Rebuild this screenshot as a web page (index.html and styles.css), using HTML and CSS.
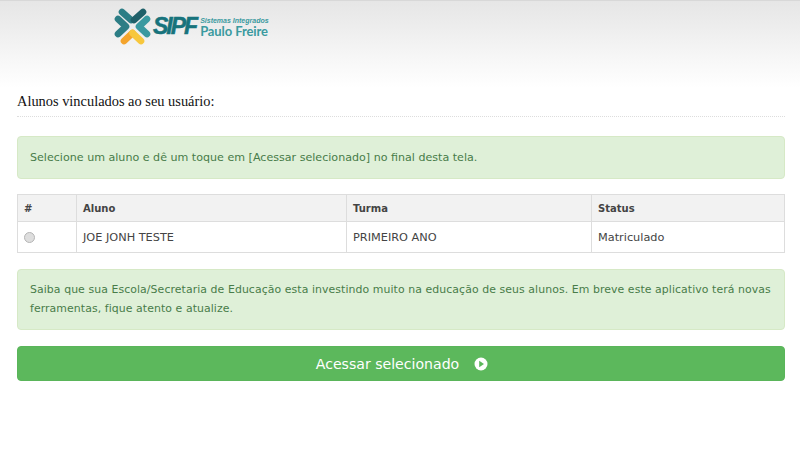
FILE: index.html
```html
<!DOCTYPE html>
<html lang="pt-BR">
<head>
  <meta charset="UTF-8" />
  <title>SIPF</title>
  <link rel="stylesheet" href="styles.css">
</head>

<body>
  <header class="topo">
    <div class="logo">
      <svg class="logo-mark" width="37" height="37" viewBox="0 0 37 37">
        <g fill="none" stroke-width="6.6" stroke-linecap="round" stroke-linejoin="round">
          <path d="M8 4 L17 12" stroke="#2c7d85" />
          <path d="M29 4 L20 12" stroke="#1f6069" />
          <path d="M4 11 L12 18.5 L4 26" stroke="#2c7d85" />
          <path d="M33 11 L25 18.5 L33 26" stroke="#3a99a0" />
          <path d="M10 33 L18.5 25" stroke="#f4a42c" />
          <path d="M27 33 L18.5 25" stroke="#f7c73d" />
        </g>
      </svg>
      <span class="logo-sipf">SIPF</span>
      <div class="logo-nome">
        <span class="logo-sub">Sistemas Integrados</span>
        <span class="logo-pf">Paulo Freire</span>
      </div>
    </div>
  </header>

  <main class="conteudo">
    <h1 class="titulo">Alunos vinculados ao seu usuário:</h1>
    <div class="alerta alerta-curto">Selecione um aluno e dê um toque em [Acessar selecionado] no final desta tela.</div>

    <table class="tabela">
      <thead>
        <tr>
          <th class="col-radio">#</th>
          <th class="col-aluno">Aluno</th>
          <th class="col-turma">Turma</th>
          <th>Status</th>
        </tr>
      </thead>
      <tbody>
        <tr>
          <td><input type="radio" name="aluno" class="radio"></td>
          <td>JOE JONH TESTE</td>
          <td>PRIMEIRO ANO</td>
          <td>Matriculado</td>
        </tr>
      </tbody>
    </table>

    <div class="alerta alerta-longo">Saiba que sua Escola/Secretaria de Educação esta investindo muito na educação de seus alunos. Em breve este aplicativo terá novas ferramentas, fique atento e atualize.</div>

    <button class="botao">
      Acessar selecionado
      <svg class="botao-icone" width="14" height="14" viewBox="0 0 14 14">
        <circle cx="7" cy="7" r="6.5" fill="#fff" />
        <path d="M5.2 3.8 L10 7 L5.2 10.2 Z" fill="#5cb85c" />
      </svg>
    </button>
  </main>
</body>
</html>
```

FILE: styles.css
```css
* {
  box-sizing: border-box;
}

body {
  margin: 0;
  height: 469px;
  overflow: hidden;
  background: #fff;
  font-family: "DejaVu Sans", Verdana, sans-serif;
  font-size: 11.1px;
  color: #444;
}

.topo {
  height: 88px;
  background: linear-gradient(to bottom, #e6e6e6 0, #ececec 22px, #f8f8f8 62px, #ffffff 100%);
  border-top: 1px solid #d8d8d8;
  padding: 7px 0 0 114px;
}

.logo {
  display: flex;
  align-items: center;
  height: 37px;
}

.logo-sipf {
  margin-left: 2px;
  font-family: "Liberation Sans", sans-serif;
  font-size: 23px;
  font-weight: bold;
  font-style: italic;
  letter-spacing: -2px;
  color: #17737c;
  -webkit-text-stroke: 0.5px #17737c;
}

.logo-nome {
  display: flex;
  flex-direction: column;
  margin-left: 4px;
  color: #3a9a9f;
}

.logo-sub {
  font-family: "Liberation Sans", sans-serif;
  font-size: 7px;
  font-weight: bold;
  line-height: 9px;
  font-style: italic;
}

.logo-pf {
  font-family: Lato, sans-serif;
  font-size: 13px;
  font-weight: bold;
  letter-spacing: -0.1px;
  line-height: 12px;
}

.conteudo {
  padding: 0 15px 0 17px;
}

.titulo {
  margin: 0;
  padding: 5px 0 6px;
  border-bottom: 1px dotted #ddd;
  font-family: "Liberation Serif", serif;
  font-size: 14.4px;
  font-weight: normal;
  line-height: 17px;
  color: #111;
}

.alerta {
  background: #dff0d8;
  border: 1px solid #d6e9c6;
  border-radius: 4px;
  padding: 11px 12px;
  color: #487c49;
  line-height: 19px;
}

.alerta-curto {
  margin-top: 19px;
  height: 43px;
}

.alerta-longo {
  margin-top: 16px;
  height: 61px;
  padding-top: 10px;
  font-size: 10.9px;
  letter-spacing: 0.08px;
}

.tabela {
  width: 100%;
  margin-top: 15px;
  border-collapse: collapse;
  table-layout: fixed;
}

.tabela th,
.tabela td {
  border: 1px solid #ddd;
  padding: 0 6px;
  text-align: left;
}

.tabela th {
  height: 27px;
  background: #f2f2f2;
  font-size: 10px;
}

.tabela td {
  height: 31px;
  font-size: 11.3px;
}

.col-radio {
  width: 59px;
}

.col-aluno {
  width: 270px;
}

.col-turma {
  width: 245px;
}

.radio {
  appearance: none;
  display: block;
  margin: 0;
  width: 11px;
  height: 11px;
  background: #dedede;
  border: 1px solid #b5b5b5;
  border-radius: 50%;
}

.botao {
  display: flex;
  justify-content: center;
  align-items: center;
  gap: 15px;
  width: 100%;
  height: 35px;
  margin-top: 16px;
  padding-left: 8px;
  background: #5cb85c;
  border: 1px solid #5ab55a;
  border-radius: 4px;
  font-family: inherit;
  font-size: 14.1px;
  color: #fff;
}
```
